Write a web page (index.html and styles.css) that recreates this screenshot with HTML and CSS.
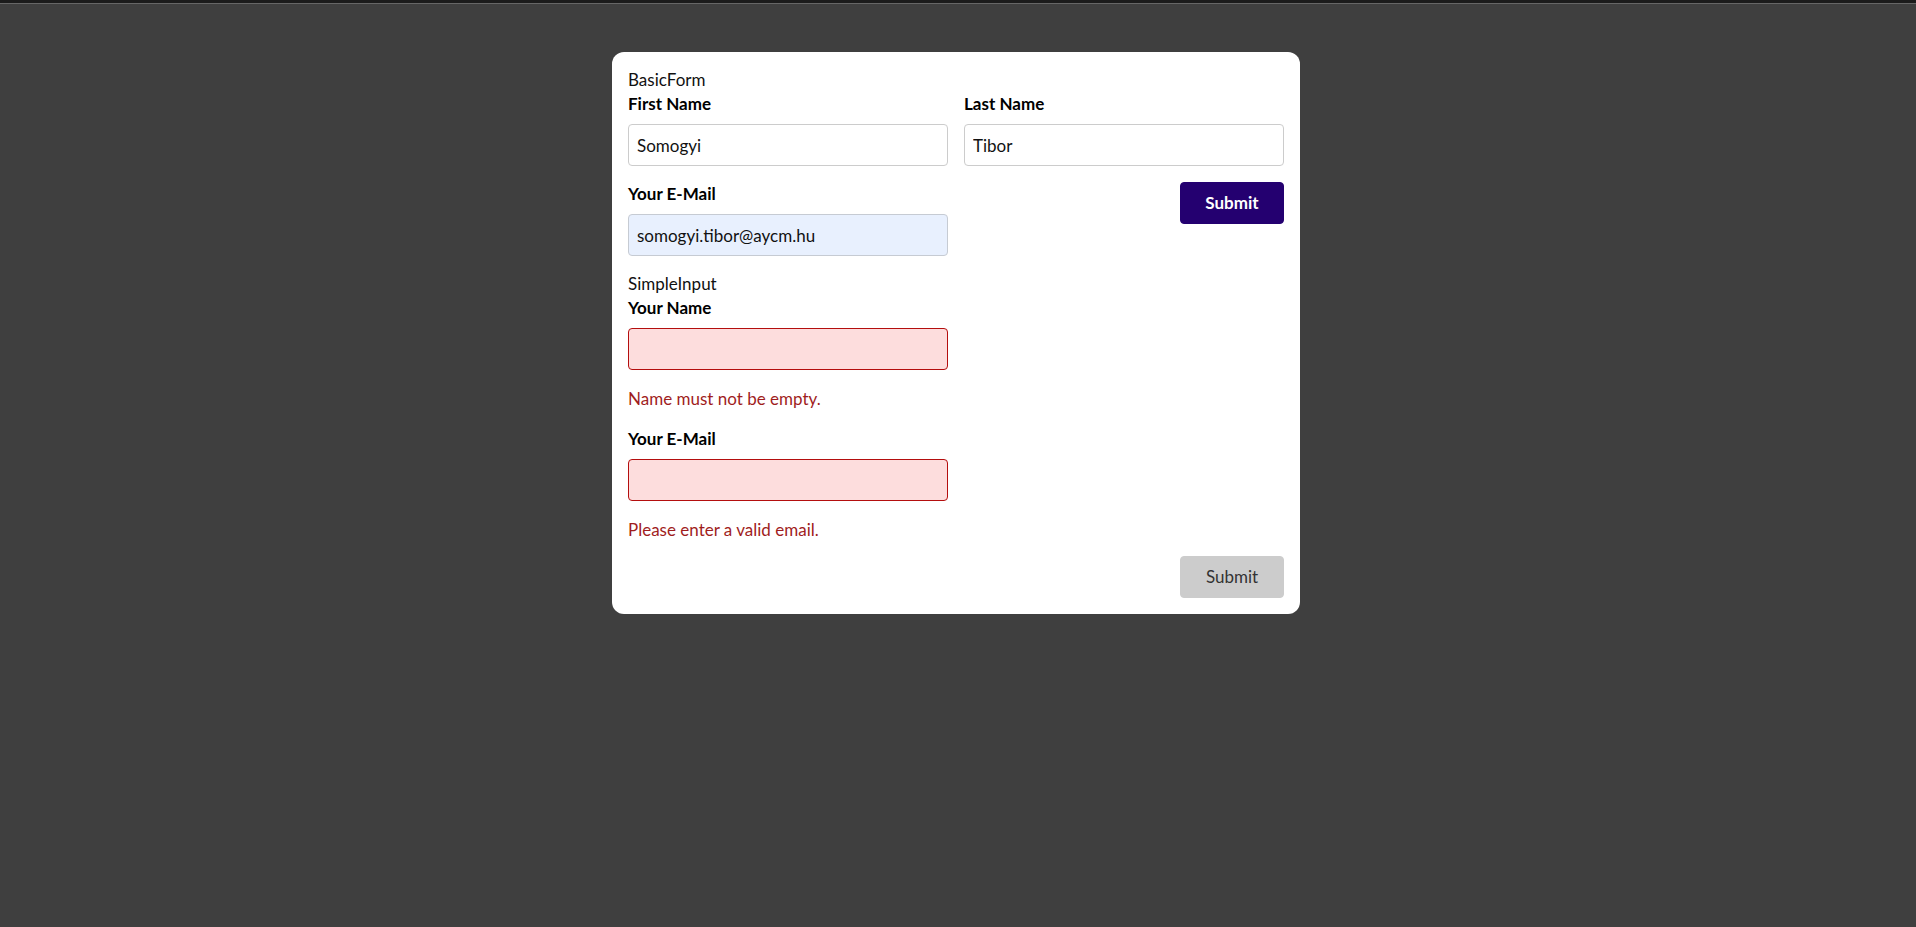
FILE: index.html
```html
<!DOCTYPE html>
<html>
	<head>
		<meta charset="utf-8">
		<title>Forms</title>
		<link rel="stylesheet" href="styles.css">
	</head>
	<body>
		<div class="topline"></div>
		<div class="card">
			<form class="basic-form">
				<div class="title">BasicForm</div>
				<div class="row">
					<div class="field">
						<label for="first">First Name</label>
						<input id="first" type="text" value="Somogyi">
					</div>
					<div class="field">
						<label for="last">Last Name</label>
						<input id="last" type="text" value="Tibor">
					</div>
				</div>
				<div class="row">
					<div class="field">
						<label for="mail">Your E-Mail</label>
						<input id="mail" class="filled" type="text" value="somogyi.tibor@aycm.hu">
					</div>
					<div class="actions">
						<button type="button" class="btn">Submit</button>
					</div>
				</div>
			</form>

			<form class="simple-form">
				<div class="title">SimpleInput</div>
				<div class="field invalid">
					<label for="name">Your Name</label>
					<input id="name" type="text">
					<p class="error">Name must not be empty.</p>
				</div>
				<div class="field invalid">
					<label for="email">Your E-Mail</label>
					<input id="email" type="text">
					<p class="error">Please enter a valid email.</p>
				</div>
				<div class="actions">
					<button type="button" class="btn" disabled>Submit</button>
				</div>
			</form>
		</div>
	</body>
</html>
```

FILE: styles.css
```css
*{
	margin: 0;
	padding: 0;
	box-sizing: border-box;
}
body{
	background-color: #3f3f3f;
	font-family: Lato, "Noto Sans", sans-serif;
	font-size: 17px;
	line-height: 24px;
	color: #000;
	min-height: 927px;
}
.topline{
	height: 4px;
	background-color: #1b1b1b;
	border-bottom: 1px solid #666;
}
.card{
	width: 688px;
	margin: 48px 0 0 calc(50% - 346px);
	padding: 16px;
	background-color: #fff;
	border-radius: 12px;
}
.title{
	color: #111;
}
.row{
	display: grid;
	grid-template-columns: 320px 320px;
	gap: 16px;
	margin-bottom: 16px;
}
.basic-form{
	margin-bottom: 16px;
}
.basic-form .row:last-child{
	margin-bottom: 0;
}
.field label{
	display: block;
	font-weight: bold;
	margin-bottom: 8px;
}
.field input{
	display: block;
	width: 320px;
	height: 42px;
	padding: 0 8px;
	font: inherit;
	color: #111;
	background-color: #fff;
	border: 1px solid #ccc;
	border-radius: 4px;
	outline: none;
}
.field input.filled{
	background-color: #e8f0fe;
	border-color: #c6cbd3;
}
.simple-form .field{
	margin-bottom: 16px;
}
.simple-form .field:nth-last-child(2){
	margin-bottom: 14px;
}
.field.invalid input{
	background-color: #fddddd;
	border-color: #b40e0e;
}
.error{
	color: #9f1d1d;
	margin-top: 17px;
}
.actions{
	display: flex;
	justify-content: flex-end;
	align-items: flex-start;
}
.btn{
	width: 104px;
	height: 42px;
	font: inherit;
	font-weight: bold;
	color: #fff;
	background-color: #240070;
	border: 1px solid #240070;
	border-radius: 4px;
	cursor: pointer;
}
.btn:disabled{
	font-weight: normal;
	color: #333;
	background-color: #ccc;
	border-color: #ccc;
	cursor: not-allowed;
}
```
